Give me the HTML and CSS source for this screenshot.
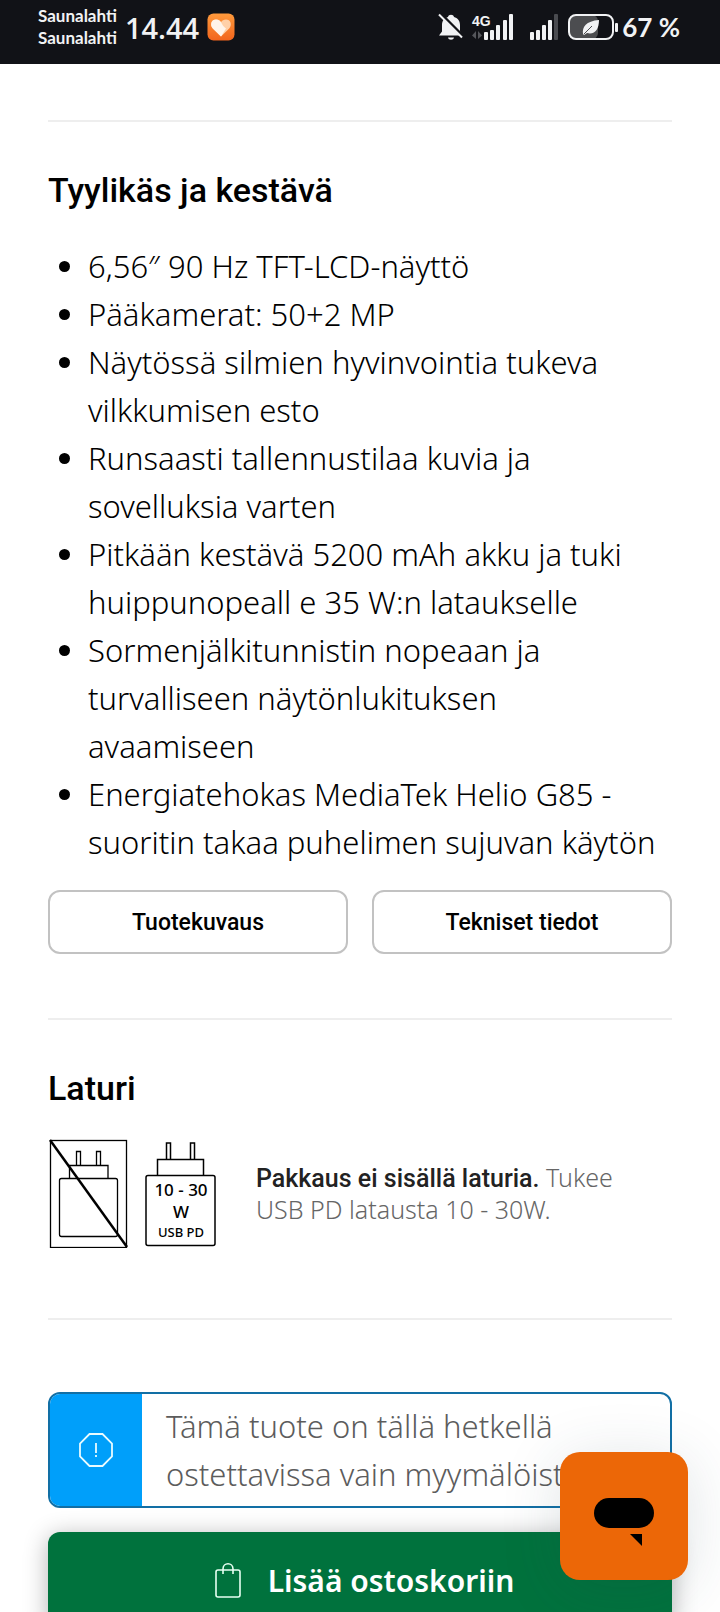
FILE: index.html
```html
<!DOCTYPE html>
<html lang="fi">
<head>
    <meta charset="UTF-8">
    <meta name="viewport" content="width=device-width, initial-scale=1.0">
    <title>Tuote</title>
    <link rel="stylesheet" href="styles.css">
</head>
<body>
    <!-- Status bar -->
    <header class="status-bar">
        <div class="carriers">
            <span>Saunalahti</span>
            <span>Saunalahti</span>
        </div>
        <span class="clock">14.44</span>
        <svg class="app-icon" width="28" height="28" viewBox="0 0 28 28">
            <defs>
                <linearGradient id="appBg" x1="0" y1="0" x2="0" y2="1">
                    <stop offset="0" stop-color="#ff9a3c"/>
                    <stop offset="1" stop-color="#f2641c"/>
                </linearGradient>
            </defs>
            <rect x="0.5" y="0.5" width="27" height="27" rx="6" fill="url(#appBg)"/>
            <path d="M14 23.500L5.800 15.500C2.500 11.500 4.500 6.500 9 6.500c2.200 0 4 1 5 2.800 1-1.800 2.800-2.800 5-2.800 4.500 0 6.500 5 3.200 9z" fill="#ffd0a8"/>
            <path d="M14 23.500L5.800 15.500C2.500 11.500 4.500 6.500 9 6.500c3 0 5 2 6 4.500 1 2 3 3.500 4 4.500z" fill="#fff4ea"/>
        </svg>
        <div class="status-right">
            <svg width="26" height="28" viewBox="0 0 26 28">
                <path d="M1 22.500l3-4V12c0-4.500 2.500-7 6-8 .5-3 5.500-3 6 0 3.500 1 6 3.500 6 8v6.500l3 4z" fill="#f1f2f4"/>
                <path d="M10 24.500h6c-.5 3-5.500 3-6 0z" fill="#f1f2f4"/>
                <path d="M3 1l23 23" stroke="#111217" stroke-width="3"/>
                <path d="M1 1.500l23 23" stroke="#f1f2f4" stroke-width="2"/>
            </svg>
            <svg class="signal-one" width="42" height="28" viewBox="0 0 42 28">
                <text class="network-label" x="0" y="13">4G</text>
                <path d="M0 22.500l4-4.500v8zM10 22.500l-4-4.500v8z" fill="#55565b"/>
                <g fill="#f1f2f4">
                    <rect x="12" y="19" width="4" height="8" rx="1"/>
                    <rect x="18" y="17" width="4" height="10" rx="1"/>
                    <rect x="24" y="12" width="4" height="15" rx="1"/>
                    <rect x="31" y="7" width="4" height="20" rx="1"/>
                    <rect x="37" y="1" width="4" height="26" rx="1"/>
                </g>
            </svg>
            <svg class="signal-two" width="30" height="28" viewBox="0 0 30 28">
                <g fill="#f1f2f4">
                    <rect x="1" y="19" width="4" height="8" rx="1"/>
                    <rect x="7" y="17" width="4" height="10" rx="1"/>
                    <rect x="13" y="12" width="4" height="15" rx="1"/>
                    <rect x="19" y="7" width="4" height="20" rx="1"/>
                    <rect x="25" y="1" width="4" height="26" rx="1" fill="#4a4b50"/>
                </g>
            </svg>
            <svg class="battery" width="50" height="28" viewBox="0 0 50 28">
                <rect x="1" y="2" width="29" height="24" rx="6" fill="#4c4d50"/>
                <rect x="1" y="2" width="44" height="24" rx="7" fill="none" stroke="#f1f2f4" stroke-width="2"/>
                <rect x="47" y="10" width="3" height="9" rx="1" fill="#f1f2f4"/>
                <path d="M15 21c-1-7 3-13 16-14 0 9-4 15-12 13l-3 2z" fill="#f1f2f4"/>
                <path d="M16 21l8-8" stroke="#4c4d50" stroke-width="1"/>
            </svg>
            <span class="battery-level">67 %</span>
        </div>
    </header>

    <main class="product">
        <section class="section">
            <h2>Tyylikäs ja kestävä</h2>
            <ul class="features">
                <li>6,56″ 90 Hz TFT-LCD-näyttö</li>
                <li>Pääkamerat: 50+2 MP</li>
                <li>Näytössä silmien hyvinvointia tukeva<br>vilkkumisen esto</li>
                <li>Runsaasti tallennustilaa kuvia ja<br>sovelluksia varten</li>
                <li>Pitkään kestävä 5200 mAh akku ja tuki<br>huippunopeall e 35 W:n lataukselle</li>
                <li>Sormenjälkitunnistin nopeaan ja<br>turvalliseen näytönlukituksen<br>avaamiseen</li>
                <li>Energiatehokas MediaTek Helio G85 -<br>suoritin takaa puhelimen sujuvan käytön</li>
            </ul>
            <div class="link-buttons">
                <button type="button" class="btn-outline">Tuotekuvaus</button>
                <button type="button" class="btn-outline">Tekniset tiedot</button>
            </div>
        </section>

        <section class="section">
            <h2>Laturi</h2>
            <div class="charger">
                <svg width="80" height="110" viewBox="0 0 80 110" fill="none" stroke="#000">
                    <rect x="2.500" y="2.500" width="76" height="107" stroke-width="1.300"/>
                    <path d="M28.500 27V13.500h4V27M48.500 27V13.500h4V27" stroke-width="1.300"/>
                    <path d="M21.500 40V27.500h38.500V40" stroke-width="1.300"/>
                    <rect x="11.500" y="40.500" width="58" height="58" rx="2" stroke-width="1.300"/>
                    <path d="M2 2l77 107" stroke-width="2.500"/>
                </svg>
                <svg class="charger-power" width="72" height="110" viewBox="0 0 72 110" fill="none" stroke="#000" stroke-width="1.500">
                    <path d="M21.500 21V5h4v16M45.500 21V5h4v16"/>
                    <path d="M12.500 37V21.500h46V37"/>
                    <rect x="1" y="37.500" width="69" height="70" rx="2"/>
                    <text class="power-value" x="36" y="58">10 - 30</text>
                    <text class="power-value" x="36" y="80">W</text>
                    <text class="power-type" x="36" y="99">USB PD</text>
                </svg>
                <p class="charger-text"><strong>Pakkaus ei sisällä laturia.</strong> Tukee<br>USB PD latausta 10 - 30W.</p>
            </div>
        </section>

        <section class="section purchase">
            <div class="notice">
                <div class="notice-icon">
                    <svg width="36" height="36" viewBox="0 0 36 36" fill="none" stroke="#e8fbff" stroke-width="1.800">
                        <path d="M11.500 2h13L34 11.500v13L24.500 34h-13L2 24.500v-13z"/>
                        <path d="M18 11v10M18 23v2"/>
                    </svg>
                </div>
                <p class="notice-text">Tämä tuote on tällä hetkellä<br>ostettavissa vain myymälöistä.</p>
            </div>
            <button type="button" class="btn-cart">
                <svg width="28" height="38" viewBox="0 0 28 38" fill="none" stroke="#e6fff2" stroke-width="1.600">
                    <rect x="2" y="9" width="24" height="27" rx="2"/>
                    <path d="M9 13V8c0-7 10-7 10 0v5"/>
                </svg>
                <span>Lisää ostoskoriin</span>
            </button>
        </section>
    </main>

    <button type="button" class="chat-button" aria-label="Chat">
        <svg width="60" height="48" viewBox="0 0 60 48">
            <rect width="60" height="30" rx="15"/>
            <path d="M36 36h12v12z"/>
        </svg>
    </button>
</body>
</html>
```
FILE: styles.css
```css
* {
    box-sizing: border-box;
}

body {
    margin: 0;
    height: 100vh;
    overflow: hidden;
    background: #fff;
    color: #000;
    font-family: "Noto Sans", "Open Sans", sans-serif;
}

h2, p, ul {
    margin: 0;
}

button {
    font-family: inherit;
    cursor: pointer;
}

svg {
    flex-shrink: 0;
}

/* Status bar */
.status-bar {
    display: flex;
    align-items: center;
    height: 64px;
    padding: 0 40px 10px 38px;
    background: #111217;
    color: #f1f2f4;
    font-family: Lato, sans-serif;
}

.carriers {
    display: flex;
    flex-direction: column;
    font-size: 17px;
    font-weight: 700;
    line-height: 22px;
}

.clock {
    margin-left: 8px;
    font-family: "Open Sans", sans-serif;
    font-size: 29px;
    font-weight: 600;
}

.app-icon {
    margin-left: 8px;
}

.status-right {
    display: flex;
    align-items: center;
    margin-left: auto;
}

.signal-one {
    margin-left: 8px;
    overflow: visible;
}

.signal-two {
    margin-left: 15px;
}

.battery {
    margin-left: 9px;
}

.network-label {
    fill: #f1f2f4;
    font-family: "Liberation Sans", sans-serif;
    font-size: 14px;
    font-weight: 700;
}

.battery-level {
    margin-left: 4px;
    font-size: 26px;
    font-weight: 700;
    line-height: 40px;
}

/* Product page */
.product {
    padding: 56px 48px 0;
}

.section {
    border-top: 2px solid #eee;
    padding: 44px 0 64px;
}

h2 {
    font-family: Roboto, sans-serif;
    font-size: 34px;
    font-weight: 500;
    line-height: 48px;
}

.features {
    padding: 28px 0 24px 40px;
    font-size: 31px;
    font-weight: 300;
    line-height: 48px;
    white-space: nowrap;
}

.link-buttons {
    display: grid;
    grid-template-columns: 1fr 1fr;
    gap: 24px;
}

.btn-outline {
    height: 64px;
    border: 2px solid #c2c2c2;
    border-radius: 12px;
    background: #fff;
    color: #000;
    font-family: Roboto, sans-serif;
    font-size: 23px;
    font-weight: 500;
}

.charger {
    display: flex;
    align-items: center;
    padding: 26px 0 6px;
}

.charger-power {
    margin-left: 17px;
}

.charger text {
    fill: #000;
    stroke: none;
    text-anchor: middle;
}

.power-value {
    font-size: 17px;
    font-weight: 500;
}

.power-type {
    font-size: 13px;
    font-weight: 500;
}

.charger-text {
    margin-left: 39px;
    color: #666;
    font-size: 25px;
    font-weight: 300;
    line-height: 30px;
    white-space: nowrap;
}

.charger-text strong {
    color: #222;
    font-family: Roboto, sans-serif;
    font-weight: 500;
}

/* Availability notice and cart */
.purchase {
    display: flex;
    flex-direction: column;
    gap: 24px;
    padding-top: 72px;
}

.notice {
    display: flex;
    border: 2px solid #126fa5;
    border-radius: 12px;
    overflow: hidden;
}

.notice-icon {
    display: flex;
    align-items: center;
    justify-content: center;
    width: 92px;
    background: #009ffa;
}

.notice-text {
    padding: 8px 24px;
    color: #5c5c5c;
    font-size: 31px;
    font-weight: 300;
    line-height: 48px;
    white-space: nowrap;
}

.btn-cart {
    display: flex;
    align-items: center;
    justify-content: center;
    gap: 26px;
    height: 96px;
    padding: 0 0 0 8px;
    border: none;
    border-radius: 12px;
    background: #00723d;
    color: #fff;
    font-size: 30px;
    font-weight: 600;
    box-shadow: 0 4px 24px rgba(0, 0, 0, 0.3);
}

.chat-button {
    position: fixed;
    right: 32px;
    bottom: 32px;
    display: flex;
    align-items: center;
    justify-content: center;
    width: 128px;
    height: 128px;
    padding: 12px 0 0;
    border: none;
    border-radius: 20px;
    background: #ec6707;
    box-shadow: 0 8px 60px rgba(40, 70, 80, 0.15);
}
```
